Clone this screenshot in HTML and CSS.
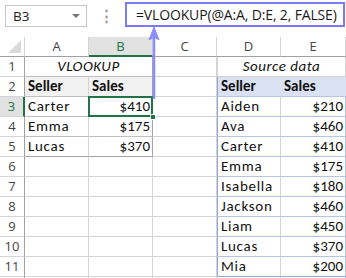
FILE: index.html
```html
<!DOCTYPE html>
<html>
<head>
<meta charset="utf-8">
<link rel="stylesheet" href="styles.css">
</head>
<body>
<div class="app">
  <div class="toolbar">
    <div class="namebox"><span class="ref">B3</span><span class="drop"></span></div>
    <div class="dots">⋮</div>
    <div class="formula">=VLOOKUP(@A:A, D:E, 2, FALSE)</div>
  </div>
  <div class="sheet">
    <div class="corner"><span class="tri"></span></div>
    <div class="colh">A</div>
    <div class="colh sel">B</div>
    <div class="colh">C</div>
    <div class="colh">D</div>
    <div class="colh">E</div>

    <div class="rowh">1</div>
    <div class="c span2 title tA tAL tAT tAR">VLOOKUP</div>
    <div class="c"></div>
    <div class="c span2 title tD tDL">Source data</div>

    <div class="rowh">2</div>
    <div class="c hdrA tAL">Seller</div>
    <div class="c hdrA tAR">Sales</div>
    <div class="c"></div>
    <div class="c hdrD tDL">Seller</div>
    <div class="c hdrD">Sales</div>

    <div class="rowh selr">3</div>
    <div class="c tA tAL txt">Carter</div>
    <div class="c tA tAR num active">$410<span class="handle"></span></div>
    <div class="c"></div>
    <div class="c tD tDL txt">Aiden</div>
    <div class="c tD num">$210</div>

    <div class="rowh">4</div>
    <div class="c tA tAL txt">Emma</div>
    <div class="c tA tAR num">$175</div>
    <div class="c"></div>
    <div class="c tD tDL txt">Ava</div>
    <div class="c tD num">$460</div>

    <div class="rowh">5</div>
    <div class="c tA tAL tAB txt">Lucas</div>
    <div class="c tA tAR tAB num">$370</div>
    <div class="c"></div>
    <div class="c tD tDL txt">Carter</div>
    <div class="c tD num">$410</div>

    <div class="rowh">6</div>
    <div class="c"></div><div class="c"></div><div class="c"></div>
    <div class="c tD tDL txt">Emma</div>
    <div class="c tD num">$175</div>

    <div class="rowh">7</div>
    <div class="c"></div><div class="c"></div><div class="c"></div>
    <div class="c tD tDL txt">Isabella</div>
    <div class="c tD num">$180</div>

    <div class="rowh">8</div>
    <div class="c"></div><div class="c"></div><div class="c"></div>
    <div class="c tD tDL txt">Jackson</div>
    <div class="c tD num">$460</div>

    <div class="rowh">9</div>
    <div class="c"></div><div class="c"></div><div class="c"></div>
    <div class="c tD tDL txt">Liam</div>
    <div class="c tD num">$450</div>

    <div class="rowh">10</div>
    <div class="c"></div><div class="c"></div><div class="c"></div>
    <div class="c tD tDL txt">Lucas</div>
    <div class="c tD num">$370</div>

    <div class="rowh">11</div>
    <div class="c"></div><div class="c"></div><div class="c"></div>
    <div class="c tD tDL tDB txt">Mia</div>
    <div class="c tD tDB num">$200</div>

    <div class="rowh"></div>
    <div class="c"></div><div class="c"></div><div class="c"></div><div class="c"></div><div class="c"></div>
  </div>
  <svg class="arrow" width="20" height="72" viewBox="0 0 20 72">
    <line x1="10" y1="8" x2="10" y2="72" stroke="#8c8cff" stroke-width="2.5"/>
    <path d="M10 0 L15 13 L10 10 L5 13 Z" fill="#8c8cff" stroke="#8c8cff" stroke-width="1" stroke-linejoin="round"/>
  </svg>
</div>
</body>
</html>
```

FILE: styles.css
```css
* { box-sizing: border-box; }
html, body { margin: 0; padding: 0; background: #fff; }
body { width: 346px; height: 278px; overflow: hidden; }
.app { position: relative; width: 346px; height: 278px; overflow: hidden; }

.toolbar {
  display: flex;
  align-items: flex-start;
  height: 37px;
  font-family: "Open Sans", "Liberation Sans", sans-serif;
}
.namebox {
  margin: 5px 0 0 5px;
  width: 82px;
  height: 22px;
  border: 1px solid #c6c6c6;
  display: flex;
  align-items: center;
  justify-content: space-between;
  padding: 0 6px 0 7px;
  font-size: 13.5px;
  color: #222;
}
.drop {
  width: 0; height: 0;
  border-left: 4px solid transparent;
  border-right: 4px solid transparent;
  border-top: 4px solid #777;
}
.dots {
  width: 38px;
  text-align: center;
  color: #9a9a9a;
  font-size: 15px;
  line-height: 30px;
  font-weight: bold;
}
.formula {
  margin-top: 2px;
  width: 220px;
  height: 25px;
  border: 2px solid #7b7bf4;
  padding-left: 9px;
  font-size: 14px;
  line-height: 21px;
  color: #1a1a1a;
  white-space: nowrap;
  letter-spacing: -0.15px;
}

.sheet {
  display: grid;
  grid-template-columns: 25px 64px 64px 64px 64px 65px;
  grid-auto-rows: 20px;
  font-family: "Carlito", "Liberation Sans", sans-serif;
  font-size: 15px;
  color: #111;
}
.corner {
  position: relative;
  border-right: 1px solid #d4d4d4;
  border-bottom: 1px solid #a0a0a0;
}
.tri {
  position: absolute;
  right: 3px; bottom: 3px;
  width: 0; height: 0;
  border-left: 13px solid transparent;
  border-bottom: 13px solid #dadada;
}
.colh, .rowh {
  font-family: "Open Sans", "Liberation Sans", sans-serif;
  font-size: 13px;
  color: #444;
  text-align: center;
  line-height: 19px;
}
.colh {
  border-bottom: 1px solid #a0a0a0;
  border-right: 1px solid #d4d4d4;
}
.colh.sel {
  background: #e1e1e1;
  color: #217346;
  border-bottom: 2px solid #217346;
}
.rowh {
  border-right: 1px solid #a0a0a0;
  border-bottom: 1px solid #d4d4d4;
}
.rowh.selr {
  background: #e1e1e1;
  color: #217346;
  border-right: 2px solid #217346;
}
.c {
  border-right: 1px solid #d4d4d4;
  border-bottom: 1px solid #d4d4d4;
  padding: 0 3px;
  line-height: 19px;
  white-space: nowrap;
  overflow: visible;
  position: relative;
}
.txt { letter-spacing: 0.7px; }
.span2 { grid-column: span 2; }
.title { font-style: italic; text-align: center; letter-spacing: 0.5px; }
.num { text-align: right; padding-right: 2px; }
.hdrA { background: #f2f2f2; font-weight: bold; border-bottom-color: #bfbfbf; }
.hdrD { background: #d9e1f2; font-weight: bold; border-bottom-color: #b4c6e7; border-right-color: #d9e1f2; }
.tA { border-bottom-color: #bfbfbf; }
.tAR { border-right-color: #a6a6a6; }
.tAB { border-bottom-color: #a6a6a6; }
.tD { border-bottom-color: #b4c6e7; }
.tD.num { border-right-color: #b4c6e7; }
.tDL { border-left: 1px solid #8ea9db; }
.tDB { border-bottom-color: #8ea9db; }
.title.tD { border-bottom-color: #d4d4d4; border-left-color: #d4d4d4; }
.active::after {
  content: "";
  position: absolute;
  left: -1px; top: -1px; right: -1px; bottom: -1px;
  border: 2px solid #217346;
}
.handle {
  position: absolute;
  right: -4px; bottom: -4px;
  width: 6px; height: 6px;
  background: #217346;
  border: 1px solid #fff;
  z-index: 2;
}
.arrow {
  position: absolute;
  left: 144px;
  top: 27px;
}
```
